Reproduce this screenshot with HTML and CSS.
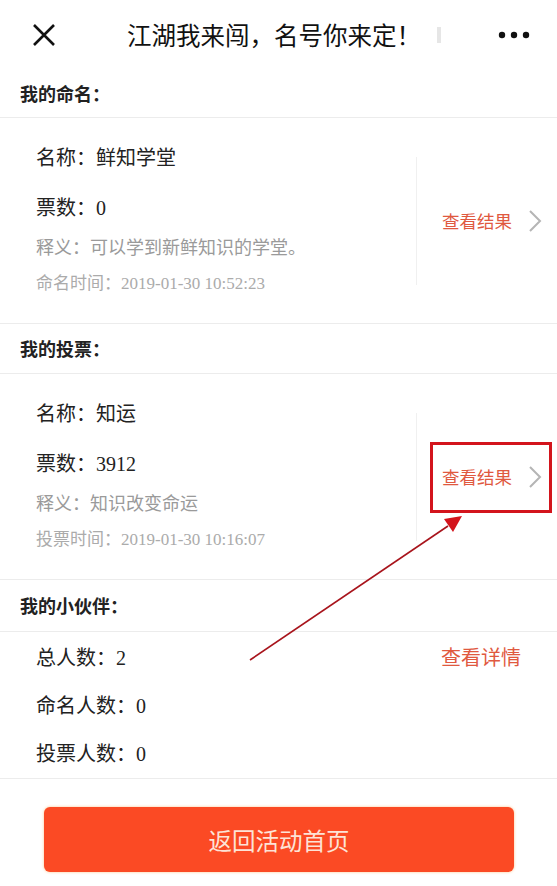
FILE: index.html
```html
<!DOCTYPE html>
<html lang="zh-CN">
<head>
    <meta charset="UTF-8">
    <meta name="viewport" content="width=device-width, initial-scale=1.0">
    <title>江湖我来闯，名号你来定！</title>
    <link rel="stylesheet" href="styles.css">
</head>
<body>
    <div class="page">
        <header class="topbar">
            <svg class="close" width="24" height="24" viewBox="0 0 24 24">
                <path d="M2 2 L22 22 M22 2 L2 22" stroke="#111" stroke-width="2.6" fill="none"/>
            </svg>
            <h1 class="title">江湖我来闯，名号你来定！<span class="fade"></span></h1>
            <svg class="more" width="32" height="8" viewBox="0 0 32 8">
                <circle cx="4" cy="4" r="3.2" fill="#111"/>
                <circle cx="16" cy="4" r="3.2" fill="#111"/>
                <circle cx="28" cy="4" r="3.2" fill="#111"/>
            </svg>
        </header>

        <section class="block">
            <h2 class="block-title">我的命名：</h2>
            <div class="card">
                <div class="info">
                    <p class="row big">名称：鲜知学堂</p>
                    <p class="row big">票数：0</p>
                    <p class="row note">释义：可以学到新鲜知识的学堂。</p>
                    <p class="row time">命名时间：2019-01-30 10:52:23</p>
                </div>
                <div class="action">
                    <span>查看结果</span>
                    <svg class="chev" width="14" height="24" viewBox="0 0 14 24">
                        <polyline points="2,2 12,12 2,22" stroke="#b5b5b5" stroke-width="2" fill="none"/>
                    </svg>
                </div>
            </div>
        </section>

        <section class="block">
            <h2 class="block-title">我的投票：</h2>
            <div class="card">
                <div class="info">
                    <p class="row big">名称：知运</p>
                    <p class="row big">票数：3912</p>
                    <p class="row note">释义：知识改变命运</p>
                    <p class="row time">投票时间：2019-01-30 10:16:07</p>
                </div>
                <div class="action">
                    <span>查看结果</span>
                    <svg class="chev" width="14" height="24" viewBox="0 0 14 24">
                        <polyline points="2,2 12,12 2,22" stroke="#b5b5b5" stroke-width="2" fill="none"/>
                    </svg>
                </div>
            </div>
        </section>

        <section class="block">
            <h2 class="block-title partner-title">我的小伙伴：</h2>
            <div class="partners">
                <div class="prow">
                    <span>总人数：2</span>
                    <span class="detail">查看详情</span>
                </div>
                <div class="prow"><span>命名人数：0</span></div>
                <div class="prow"><span>投票人数：0</span></div>
            </div>
        </section>

        <button class="back-btn">返回活动首页</button>

        <!-- annotation drawn over the screenshot -->
        <svg class="mark" width="557" height="886" viewBox="0 0 557 886">
            <rect x="431.5" y="443.5" width="119" height="68" fill="none" stroke="#d3141c" stroke-width="3"/>
            <line x1="250" y1="660" x2="448" y2="526" stroke="#a8141c" stroke-width="1.6"/>
            <polygon points="462,516 444,519 453,532" fill="#d3141c"/>
        </svg>
    </div>
</body>
</html>
```

FILE: styles.css
```css
body {
    margin: 0;
    background: #fff;
    font-family: "Liberation Serif", "Noto Sans CJK SC", serif;
    color: #333;
}
.page {
    position: relative;
    width: 557px;
    height: 886px;
    overflow: hidden;
}
.topbar {
    height: 69px;
    display: flex;
    align-items: center;
    padding: 0 27px 0 32px;
}
.close {
    flex: none;
}
.title {
    flex: 1;
    margin: 0 0 0 71px;
    font-family: "Noto Sans CJK SC", sans-serif;
    font-weight: normal;
    font-size: 24.5px;
    color: #111;
    display: flex;
    align-items: center;
}
.fade {
    display: inline-block;
    width: 4px;
    height: 16px;
    margin-left: 16px;
    background: #e6e6e6;
}
.more {
    flex: none;
}
.block-title {
    margin: 0;
    height: 48px;
    line-height: 48px;
    padding-left: 20px;
    font-family: "Noto Sans CJK SC", sans-serif;
    font-size: 18px;
    font-weight: bold;
    color: #222;
    border-bottom: 1px solid #ececec;
}
.block + .block .block-title {
    height: 49px;
    line-height: 49px;
}
.block + .block .partner-title {
    height: 51px;
    line-height: 51px;
}
.card {
    display: flex;
    align-items: center;
    border-bottom: 1px solid #ececec;
}
.info {
    flex: 1;
    padding: 15px 0 18px 36px;
}
.row {
    margin: 0;
}
.big {
    height: 50px;
    line-height: 50px;
    font-size: 20px;
    color: #222;
}
.note {
    height: 30px;
    line-height: 30px;
    font-size: 18px;
    color: #9a9a9a;
}
.time {
    height: 42px;
    line-height: 42px;
    font-size: 17px;
    color: #ababab;
}
.action {
    width: 115px;
    height: 128px;
    padding-left: 25px;
    border-left: 1px solid #f0f0f0;
    display: flex;
    align-items: center;
    font-family: "Noto Sans CJK SC", sans-serif;
    font-size: 17.5px;
    color: #e0593f;
}
.chev {
    margin-left: 16px;
}
.partners {
    padding-bottom: 2px;
    border-bottom: 1px solid #ececec;
}
.prow {
    height: 48px;
    display: flex;
    align-items: center;
    justify-content: space-between;
    padding: 0 36px;
    font-size: 20px;
    color: #222;
}
.detail {
    font-family: "Noto Sans CJK SC", sans-serif;
    color: #e0593f;
}
.back-btn {
    display: block;
    width: 470px;
    height: 65px;
    margin: 28px 0 0 44px;
    border: none;
    border-radius: 6px;
    background: #fb4a24;
    box-shadow: 0 0 3px #ffc48a;
    font-family: "Noto Sans CJK SC", sans-serif;
    font-size: 23.5px;
    color: #fde3d6;
}
.mark {
    position: absolute;
    left: 0;
    top: 0;
    pointer-events: none;
}
```
